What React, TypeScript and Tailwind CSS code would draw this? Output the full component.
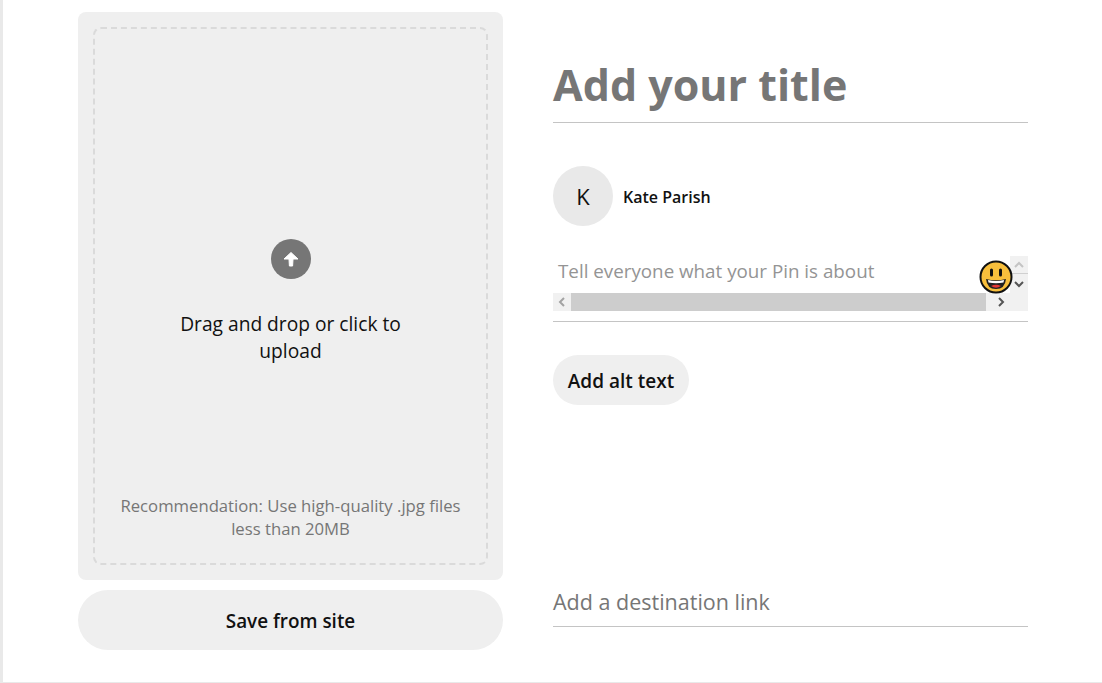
const font = { fontFamily: '"Open Sans", "Noto Sans", sans-serif' };

const Chevron = ({ d, color = "#a3a3a3" }: { d: string; color?: string }) => (
  <svg width="10" height="10" viewBox="0 0 10 10" fill="none" stroke={color} strokeWidth="2">
    <path d={d} />
  </svg>
);

const Smiley = () => (
  <svg width="34" height="34" viewBox="0 0 34 34" className="absolute left-[426px] top-[4px]">
    <circle cx="17" cy="17" r="15.5" fill="#f8bf3c" stroke="#111" strokeWidth="2" />
    <rect x="11" y="8.5" width="3" height="8" rx="1.5" fill="#111" />
    <rect x="20" y="8.5" width="3" height="8" rx="1.5" fill="#111" />
    <path d="M7 19 Q17 21.5 27 19 Q26 29 17 29 Q8 29 7 19 Z" fill="#222" />
    <path d="M9 20 Q17 22 25 20 L24.5 22.5 Q17 24 9.5 22.5 Z" fill="#fff" />
    <path d="M12 26 Q17 23.5 22 26 Q17 29.5 12 26 Z" fill="#e53935" />
  </svg>
);

export default function App() {
  return (
    <div className="w-[1102px] h-[683px] bg-white border-l-[3px] border-b border-[#e9e9e9] flex overflow-hidden" style={font}>
      <div className="w-[425px] ml-[75px] pt-3 flex flex-col gap-[10px]">
        <div className="h-[568px] bg-[#efefef] rounded-lg p-[15px]">
          <div className="h-full border-2 border-dashed border-[#dadada] rounded-lg flex flex-col items-center px-6">
            <div className="mt-[210px] w-10 h-10 rounded-full bg-[#767676] flex items-center justify-center">
              <svg width="18" height="18" viewBox="0 0 18 18" fill="#fff">
                <path d="M9 2.5 L16 9 L11 9 L10.6 16 L7.4 16 L7 9 L2 9 Z" strokeLinejoin="round" stroke="#fff" strokeWidth="1" />
              </svg>
            </div>
            <div className="mt-[31px] w-[240px] text-center text-[19.2px] leading-[27px] text-[#111]">
              Drag and drop or click to upload
            </div>
            <div className="mt-auto mb-[23px] w-[360px] text-center text-[16.7px] leading-[23px] text-[#767676]">
              Recommendation: Use high-quality .jpg files less than 20MB
            </div>
          </div>
        </div>
        <div className="h-[60px] pt-[2px] rounded-[30px] bg-[#efefef] flex items-center justify-center text-[18.9px] font-semibold text-[#111]">
          Save from site
        </div>
      </div>
      <div className="w-[475px] ml-[50px] flex flex-col">
        <div className="h-[123px] border-b border-[#c4c4c4] pt-[55px] text-[43px] leading-[60px] font-bold text-[#767676]">
          Add your title
        </div>
        <div className="mt-[43px] flex items-center gap-[10px]">
          <div className="w-[60px] h-[60px] rounded-full bg-[#e9e9e9] flex items-center justify-center text-[22px] text-[#111]">K</div>
          <div className="pt-[1px] text-[16px] font-semibold text-[#111]">Kate Parish</div>
        </div>
        <div className="relative mt-[30px] h-[66px] border-b border-[#c4c4c4]">
          <div className="h-[37px] flex">
            <div className="flex-1 pl-[5px] pt-[2px] text-[18.8px] leading-[26px] text-[#949494]">
              Tell everyone what your Pin is about
            </div>
            <div className="w-[18px] bg-[#f1f1f1] flex flex-col items-center">
              <div className="h-[18px] w-full border-b border-[#d0d0d0] flex items-center justify-center">
                <Chevron d="M1 7 L5 3 L9 7" color="#c4c4c4" />
              </div>
              <div className="flex-1 flex items-center justify-center">
                <Chevron d="M1 3 L5 7 L9 3" color="#555" />
              </div>
            </div>
          </div>
          <div className="h-[18px] flex bg-[#f1f1f1]">
            <div className="w-[18px] flex items-center justify-center">
              <Chevron d="M7 1 L3 5 L7 9" />
            </div>
            <div className="w-[415px] bg-[#cdcdcd]" />
            <div className="w-[30px] flex items-center justify-center">
              <Chevron d="M3 1 L7 5 L3 9" color="#555" />
            </div>
          </div>
          <Smiley />
        </div>
        <div className="mt-[33px] w-[136px] h-[50px] pt-[2px] rounded-[25px] bg-[#efefef] flex items-center justify-center text-[19px] font-semibold text-[#111]">
          Add alt text
        </div>
        <div className="mt-[176px] h-[46px] border-b border-[#c4c4c4] text-[21.5px] leading-[42px] text-[#767676]">
          Add a destination link
        </div>
      </div>
    </div>
  );
}
